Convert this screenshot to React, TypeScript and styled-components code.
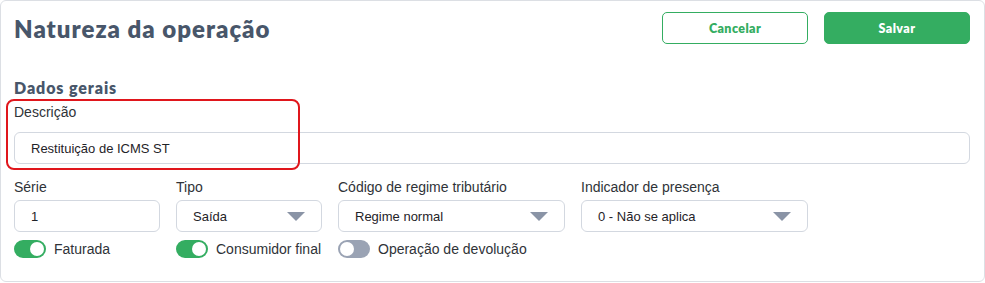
import styled, { createGlobalStyle } from 'styled-components';

const GlobalStyle = createGlobalStyle`
  * { box-sizing: border-box; }
  body {
    margin: 0;
    background: #ffffff;
    font-family: "Liberation Sans", Arial, sans-serif;
  }
`;

const Panel = styled.section`
  position: relative;
  width: 985px;
  height: 282px;
  border: 1px solid #dcdfe4;
  border-radius: 6px;
  padding: 11px 14px 0 13px;
  background: #fff;
`;

const Header = styled.header`
  display: flex;
  align-items: center;
  justify-content: space-between;
  height: 32px;
`;

const Title = styled.h1`
  margin: 0;
  font-family: Lato, "Open Sans", sans-serif;
  font-weight: 800;
  font-size: 24px;
  color: #48566a;
  letter-spacing: 1px;
`;

const Actions = styled.div`
  display: flex;
  gap: 16px;
`;

const ActionButton = styled.button<{ $primary?: boolean }>`
  width: 146px;
  height: 32px;
  border-radius: 5px;
  border: 1px solid #34ad61;
  background: ${(p) => (p.$primary ? '#34ad61' : '#fff')};
  color: ${(p) => (p.$primary ? '#fff' : '#34ad61')};
  font-family: Lato, "Open Sans", sans-serif;
  font-weight: 800;
  font-size: 12.5px;
  letter-spacing: 0.4px;
  cursor: pointer;
`;

const Section = styled.h2`
  margin: 34px 0 0;
  height: 19px;
  font-family: Lato, "Open Sans", sans-serif;
  font-weight: 800;
  font-size: 16px;
  color: #48566a;
  letter-spacing: 0.9px;
`;

const Field = styled.label<{ $gap?: number }>`
  display: flex;
  flex-direction: column;
  gap: ${(p) => p.$gap ?? 5}px;
`;

const DescField = styled(Field)`
  position: relative;
  margin-top: 7px;
`;

const Highlight = styled.span`
  position: absolute;
  left: -8px;
  top: -5px;
  width: 294px;
  height: 71px;
  border: 2px solid #e0161c;
  border-radius: 8px;
  pointer-events: none;
`;

const Label = styled.span`
  font-size: 14px;
  color: #2f3338;
  height: 16px;
  line-height: 16px;
`;

const Box = styled.div`
  height: 32px;
  border: 1px solid #d3d8e0;
  border-radius: 6px;
  display: flex;
  align-items: center;
  justify-content: space-between;
  padding: 0 16px;
  font-size: 13px;
  color: #1f2328;
  background: #fff;
`;

const Grid = styled.div`
  display: grid;
  grid-template-columns: 146px 146px 227px 227px;
  column-gap: 16px;
  row-gap: 7px;
  margin-top: 15px;
`;

const Caret = styled.span`
  width: 0;
  height: 0;
  border-left: 9px solid transparent;
  border-right: 9px solid transparent;
  border-top: 9px solid #8a94a6;
`;

const ToggleRow = styled.div`
  display: flex;
  align-items: center;
  gap: 8px;
  height: 20px;
  font-size: 14px;
  color: #2f3338;
  white-space: nowrap;
`;

const Track = styled.span<{ $on: boolean }>`
  position: relative;
  width: 32px;
  height: 18px;
  border-radius: 9px;
  background: ${(p) => (p.$on ? '#34ad61' : '#9aa3b4')};
  flex-shrink: 0;
`;

const Knob = styled.span<{ $on: boolean }>`
  position: absolute;
  top: 2px;
  left: ${(p) => (p.$on ? '16px' : '2px')};
  width: 14px;
  height: 14px;
  border-radius: 50%;
  background: #fff;
`;

function Toggle({ on, label }: { on: boolean; label: string }) {
  return (
    <ToggleRow>
      <Track $on={on}>
        <Knob $on={on} />
      </Track>
      {label}
    </ToggleRow>
  );
}

function Select({ value }: { value: string }) {
  return (
    <Box>
      {value}
      <Caret />
    </Box>
  );
}

export default function App() {
  return (
    <>
      <GlobalStyle />
      <Panel>
        <Header>
          <Title>Natureza da operação</Title>
          <Actions>
            <ActionButton>Cancelar</ActionButton>
            <ActionButton $primary>Salvar</ActionButton>
          </Actions>
        </Header>
        <Section>Dados gerais</Section>
        <DescField $gap={12}>
          <Highlight />
          <Label>Descrição</Label>
          <Box>Restituição de ICMS ST</Box>
        </DescField>
        <Grid>
          <Field>
            <Label>Série</Label>
            <Box>1</Box>
          </Field>
          <Field>
            <Label>Tipo</Label>
            <Select value="Saída" />
          </Field>
          <Field>
            <Label>Código de regime tributário</Label>
            <Select value="Regime normal" />
          </Field>
          <Field>
            <Label>Indicador de presença</Label>
            <Select value="0 - Não se aplica" />
          </Field>
          <Toggle on label="Faturada" />
          <Toggle on label="Consumidor final" />
          <Toggle on={false} label="Operação de devolução" />
        </Grid>
      </Panel>
    </>
  );
}
